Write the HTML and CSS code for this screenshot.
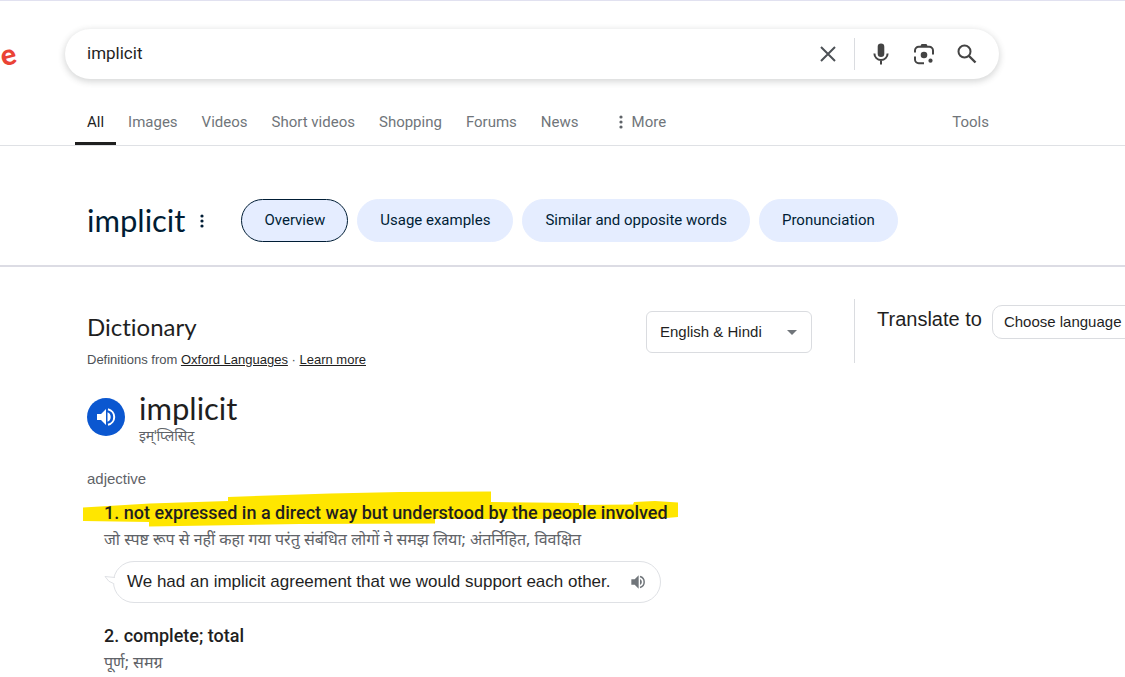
FILE: index.html
```html
<!DOCTYPE html>
<html lang="en">
<head>
<meta charset="utf-8">
<meta name="viewport" content="width=device-width, initial-scale=1">
<title>implicit</title>
<link rel="stylesheet" href="styles.css">
</head>
<body>
<header class="top">
  <div class="search-row">
    <a class="logo" href="#"><span class="logo-letter">e</span></a>
    <form class="search" role="search">
      <input class="search-input" type="text" value="implicit" aria-label="Search">
      <button class="icon-btn clear" type="button" aria-label="Clear">
        <svg width="24" height="24" viewBox="0 0 24 24"><path d="M5 5L19 19M19 5L5 19" fill="none" stroke="#4d5156" stroke-width="2"/></svg>
      </button>
      <span class="search-divider"></span>
      <button class="icon-btn" type="button" aria-label="Search by voice">
        <svg width="24" height="24" viewBox="0 0 24 24" fill="#444"><rect x="8.7" y="1.5" width="6.6" height="13.5" rx="3.3"/><path d="M5.4 11.5a6.6 6.6 0 0 0 13.200 0M12 18v4.500" fill="none" stroke="#444" stroke-width="2"/></svg>
      </button>
      <button class="icon-btn" type="button" aria-label="Search by image">
        <svg width="24" height="24" viewBox="0 0 24 24" fill="#444"><path d="M3 10.500V8.500a3.700 3.700 0 0 1 3.700-3.700h10.600A3.700 3.700 0 0 1 21 8.500v4M3 14.500v3a3.700 3.700 0 0 0 3.700 3.700H12" fill="none" stroke="#444" stroke-width="2"/><path d="M8 5l1.500-3h5L16 5z"/><circle cx="12" cy="13" r="3.300"/><circle cx="18.500" cy="18.700" r="2.100"/></svg>
      </button>
      <button class="icon-btn" type="submit" aria-label="Search">
        <svg width="24" height="24" viewBox="0 0 24 24"><circle cx="9.500" cy="9.500" r="6" fill="none" stroke="#444" stroke-width="2"/><path d="M14 14l6.500 6.500" stroke="#444" stroke-width="2.400"/></svg>
      </button>
    </form>
  </div>
  <nav class="tabs" aria-label="Result types">
    <a class="tab tab-active" href="#">All</a>
    <a class="tab" href="#">Images</a>
    <a class="tab" href="#">Videos</a>
    <a class="tab" href="#">Short videos</a>
    <a class="tab" href="#">Shopping</a>
    <a class="tab" href="#">Forums</a>
    <a class="tab" href="#">News</a>
    <button class="tab tab-more" type="button"><svg width="4" height="14" viewBox="0 0 4 14" fill="#5f6368"><circle cx="2" cy="2" r="1.600"/><circle cx="2" cy="7" r="1.600"/><circle cx="2" cy="12" r="1.600"/></svg>More</button>
    <button class="tab tab-tools" type="button">Tools</button>
  </nav>
</header>

<section class="topic">
  <h1 class="topic-title">implicit</h1>
  <button class="dots" type="button" aria-label="More options"><svg width="4" height="14" viewBox="0 0 4 14" fill="#001d35"><circle cx="2" cy="2" r="1.600"/><circle cx="2" cy="7" r="1.600"/><circle cx="2" cy="12" r="1.600"/></svg></button>
  <div class="chips">
    <a class="chip chip-active" href="#">Overview</a>
    <a class="chip" href="#">Usage examples</a>
    <a class="chip" href="#">Similar and opposite words</a>
    <a class="chip" href="#">Pronunciation</a>
  </div>
</section>

<main class="content">
  <article class="dictionary">
    <div class="dict-head">
      <div>
        <h2 class="dict-title">Dictionary</h2>
        <p class="source">Definitions from <a href="#">Oxford Languages</a> <span class="sep">·</span> <a href="#">Learn more</a></p>
      </div>
      <div class="lang">
        <select class="lang-select" aria-label="Dictionary language"><option>English &amp; Hindi</option></select>
        <svg class="lang-arrow" width="10" height="5" viewBox="0 0 10 5"><path d="M0 0h10L5 5z" fill="#70757a"/></svg>
      </div>
    </div>
    <div class="word">
      <button class="speak" type="button" aria-label="Listen">
        <svg width="24" height="24" viewBox="0 0 24 24" fill="#fff"><path d="M3 9v6h4l5 5V4L7 9z"/><path d="M13.500 7.200v9.600a5.200 5.200 0 0 0 0-9.600z"/><path d="M14 4.200a8 8 0 0 1 0 15.600" fill="none" stroke="#fff" stroke-width="2"/></svg>
      </button>
      <div>
        <h3 class="word-title">implicit</h3>
        <p class="hindi phonetic" lang="hi">इम्ˈप्लिसिट्</p>
      </div>
    </div>
    <p class="pos">adjective</p>
    <ol class="senses">
      <li class="sense">
        <div class="marked">
          <svg class="marker" width="596" height="36" viewBox="83 492 596 36"><path d="M83 508.500L150 504.500L228 502V498L330 494.500L400 493L491 492.500V503L579 504V506L633 505.500L634 503L655 502L678 503.500V518L655 520H435V524.500L300 525L149 527.500V523L83 522Z" fill="#ffe600"/></svg>
          <h4 class="sense-title">1. not expressed in a direct way but understood by the people involved</h4>
        </div>
        <p class="hindi" lang="hi">जो स्पष्ट रूप से नहीं कहा गया परंतु संबंधित लोगों ने समझ लिया; अंतर्निहित, विवक्षित</p>
        <div class="example">
          <svg class="tail" width="12" height="14" viewBox="0 0 12 14"><path d="M11 2.500L1 1.500Q4.500 7.500 9.500 8.500" fill="#fff" stroke="#dfe1e5"/><path d="M10.500 3v5" stroke="#fff" stroke-width="3"/></svg>
          <span>We had an implicit agreement that we would support each other.</span>
          <button class="mini-speak" type="button" aria-label="Listen to example">
            <svg width="16" height="16" viewBox="0 0 24 24" fill="#70757a"><path d="M2 8v8h5l6 6V2L7 8z"/><path d="M15 7.500v9a5 5 0 0 0 0-9z"/><path d="M15 3.800a8.500 8.500 0 0 1 0 16.400" fill="none" stroke="#70757a" stroke-width="2.200"/></svg>
          </button>
        </div>
      </li>
      <li class="sense">
        <h4 class="sense-title">2. complete; total</h4>
        <p class="hindi" lang="hi">पूर्ण; समग्र</p>
      </li>
    </ol>
  </article>
  <aside class="translate">
    <label class="translate-label" for="target">Translate to</label>
    <select class="translate-select" id="target"><option>Choose language</option></select>
  </aside>
</main>
</body>
</html>
```

FILE: styles.css
```css
* { box-sizing: border-box; }
body {
  margin: 0;
  overflow: hidden;
  border-top: 1px solid #e1e1f0;
  background: #fff;
  color: #1f1f1f;
  font-family: "Liberation Sans", Arial, sans-serif;
  font-size: 16px;
}
h1, h2, h3, h4, p, ol { margin: 0; padding: 0; font-weight: 400; }
ol { list-style: none; }
button { border: 0; padding: 0; background: none; font: inherit; color: inherit; }
svg { display: block; }
a { color: inherit; }

.top { border-bottom: 1px solid #dfe1e5; }
.search-row { display: flex; align-items: center; padding-top: 28px; padding-right: 40px; }
.logo { flex: none; display: flex; justify-content: flex-start; width: 65px; text-decoration: none; }
.logo-letter {
  color: #ea4335;
  font: 900 29px/36px Lato, sans-serif;
  transform: rotate(-14deg);
}
.search {
  display: flex;
  align-items: center;
  flex: 1;
  max-width: 934px;
  height: 50px;
  padding: 0 20px 0 22px;
  border-radius: 25px;
  box-shadow: 0 2px 6px 1px rgba(60, 64, 67, .2);
}
.search-input {
  flex: 1;
  min-width: 0;
  border: 0;
  padding: 0 0 2px;
  outline: 0;
  background: none;
  color: #1f1f1f;
  font: 17px/24px Roboto, sans-serif;
}
.icon-btn { margin-left: 19px; }
.search-divider { width: 1px; height: 32px; margin: 0 -5px 0 14px; background: #dadce0; }

.tabs {
  display: flex;
  padding: 24px 124px 0 75px;
  color: #70757a;
  font: 15px/24px Roboto, sans-serif;
}
.tab { padding: 7px 12px 11px; text-decoration: none; white-space: nowrap; }
.tab-active { border-bottom: 3px solid #1f1f1f; padding-bottom: 8px; color: #1f1f1f; }
.tab-more { display: flex; align-items: center; gap: 9px; margin-left: 16px; }
.tab-tools { margin-left: auto; }

.topic {
  display: flex;
  align-items: center;
  padding: 53px 24px 23px 87px;
  border-bottom: 2px solid #dcdce4;
  color: #001d35;
}
.topic-title { font: 31px/43px Lato, sans-serif; }
.dots { margin: 0 37px 0 15px; }
.chips { display: flex; gap: 9px; }
.chip {
  padding: 9px 22px;
  border: 1px solid #e5edff;
  border-radius: 22px;
  background: #e5edff;
  font: 15px/23px Roboto, sans-serif;
  text-decoration: none;
  white-space: nowrap;
}
.chip-active { border-color: #001d35; }

.content {
  display: grid;
  grid-template-columns: minmax(0, 725px) minmax(0, 1fr);
  gap: 42px;
  padding: 32px 0 0 87px;
}
.dict-head { display: flex; justify-content: space-between; align-items: flex-start; padding-top: 12px; }
.dict-title { font: 24px/32px Lato, sans-serif; font-variant-ligatures: none; }
.source { padding-top: 9px; color: #4d5156; font-size: 13px; line-height: 16px; }
.source a { color: #1f1f1f; }
.lang { position: relative; }
.lang-select, .translate-select {
  appearance: none;
  border: 1px solid #dadce0;
  border-radius: 6px;
  background: #fff;
  color: #1f1f1f;
  font: 15px/20px "Liberation Sans", Arial, sans-serif;
}
.lang-select { width: 166px; height: 42px; padding: 0 36px 0 13px; }
.lang-arrow { position: absolute; right: 15px; top: 19px; pointer-events: none; }
.word { display: flex; gap: 14px; padding-top: 20px; }
.speak {
  display: grid;
  place-items: center;
  width: 38px;
  height: 38px;
  margin-top: 10px;
  border-radius: 50%;
  background: #0b57d0;
}
.word-title { font: 31px/40px Lato, sans-serif; }
.hindi { color: #5f6368; font: 16px/24px "Noto Sans", "Noto Sans Devanagari", sans-serif; }
.phonetic { font-size: 14px; line-height: 16px; }
.pos { padding-top: 25px; color: #5f6368; font-size: 15px; line-height: 20px; }
.senses { padding: 10px 0 0 17px; }
.sense { padding-bottom: 19px; }
.sense-title { font: 500 18px/28px Roboto, sans-serif; position: relative; }
.marked { position: relative; }
.marker { position: absolute; left: -21px; top: -8px; }
.example {
  position: relative;
  display: inline-flex;
  align-items: center;
  gap: 19px;
  margin: 10px 0 0 9px;
  padding: 9px 14px 9px 13px;
  border: 1px solid #dfe1e5;
  border-radius: 21px;
  font-size: 17px;
  line-height: 22px;
  white-space: nowrap;
}
.tail { position: absolute; left: -10px; top: 13px; }

.translate {
  display: flex;
  align-items: flex-start;
  gap: 10px;
  height: 64px;
  padding: 6px 0 0 22px;
  border-left: 1px solid #dadce0;
  white-space: nowrap;
}
.translate-label { font-size: 20px; line-height: 28px; }
.translate-select { flex: none; width: 180px; height: 34px; padding: 0 11px; border-radius: 10px; }
```
